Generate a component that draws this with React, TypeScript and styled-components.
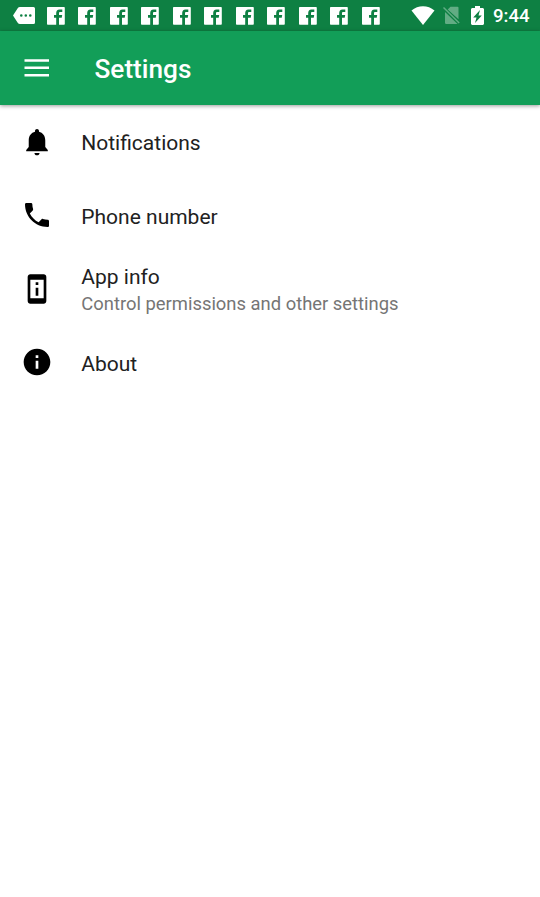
import React from "react";
import styled, { createGlobalStyle } from "styled-components";

const GlobalStyle = createGlobalStyle`
  * { box-sizing: border-box; }
  body { margin: 0; background: #fff; font-family: Roboto, sans-serif; }
`;

const Screen = styled.div`
  display: flex;
  flex-direction: column;
  height: 897px;
  overflow: hidden;
  background: #fff;
`;

const StatusBar = styled.div`
  display: flex;
  align-items: center;
  flex: none;
  height: 31px;
  padding: 0 11px 0 13px;
  background: #0e8043;
  color: #fff;
`;

const NoticeIcons = styled.div`
  display: flex;
  align-items: center;
  gap: 13.5px;
  flex: 1;
`;

const SystemIcons = styled.div`
  display: flex;
  align-items: center;
`;

const Glyph = styled.svg<{ $w: number; $h: number; $gap?: number }>`
  display: block;
  flex: none;
  width: ${(p) => p.$w}px;
  height: ${(p) => p.$h}px;
  margin-right: ${(p) => p.$gap ?? 0}px;
  fill: currentColor;
`;

const Clock = styled.span`
  width: 36px;
  padding-top: 2px;
  font-size: 18.6px;
  font-weight: 500;
  line-height: 31px;
  white-space: nowrap;
`;

const AppBar = styled.header`
  display: flex;
  align-items: center;
  flex: none;
  height: 74px;
  padding: 0 24px;
  gap: 44.5px;
  background: #129e58;
  color: #fff;
  box-shadow: 0 1px 4px rgba(0, 0, 0, 0.4);
`;

const Title = styled.h1`
  margin: 3px 0 0;
  font-size: 26.2px;
  font-weight: 500;
  line-height: 31px;
`;

const List = styled.main`
  display: flex;
  flex-direction: column;
`;

const Row = styled.div`
  display: flex;
  align-items: center;
  height: 73.5px;
  color: #000;
`;

const IconSlot = styled.div`
  width: 81.3px;
  padding-left: 20.8px;
`;

const RowText = styled.div`
  padding-top: 2.5px;
`;

const Label = styled.div`
  color: #212121;
  font-size: 21px;
  line-height: 26px;
`;

const Summary = styled.div`
  color: #757575;
  font-size: 18.4px;
  line-height: 27px;
`;

const rows = [
  { label: "Notifications", icon: "M12 22c1.1 0 1.900-.7 1.900-1.800h-3.800c0 1.100.8 1.800 1.900 1.800zm6.200-6.200v-5c0-3.400-1.900-5.700-4.700-6.400V3.700c0-.83-.67-1.500-1.500-1.500s-1.500.67-1.500 1.500v.7C7.700 5.100 5.800 7.400 5.800 10.800v5L3.900 18v1h16.200v-1z" },
  { label: "Phone number", icon: "M6.62 10.79c1.44 2.830 3.760 5.140 6.590 6.590l2.200-2.200c.27-.27.67-.36 1.020-.24 1.120.37 2.330.57 3.570.57.550 0 1 .45 1 1V20c0 .55-.45 1-1 1-9.390 0-17-7.610-17-17 0-.55.45-1 1-1h3.500c.55 0 1 .45 1 1 0 1.250.2 2.450.57 3.570.11.35.03.74-.25 1.020l-2.200 2.200z" },
  { label: "App info", summary: "Control permissions and other settings", icon: "M13 7h-2v2h2V7zm0 4h-2v6h2v-6zm4-9.990L7 1c-1.100 0-2 .9-2 2v18c0 1.100.9 2 2 2h10c1.100 0 2-.9 2-2V3c0-1.100-.9-1.990-2-1.990zM17 19H7V5h10v14z" },
  { label: "About", icon: "M12 2C6.480 2 2 6.480 2 12s4.480 10 10 10 10-4.480 10-10S17.520 2 12 2zm1 15h-2v-6h2v6zm0-8h-2V7h2v2z" },
];

export default function App() {
  return (
    <>
      <GlobalStyle />
      <Screen>
        <StatusBar>
          <NoticeIcons>
            <Glyph $w={22} $h={17} $gap={-2} viewBox="0 0 22 17">
              <path fillRule="evenodd" d="M7 0H20.500a1.500 1.500 0 0 1 1.500 1.500V15.500a1.500 1.500 0 0 1-1.500 1.500H7Q5.500 17 4.700 15.700L0 8.500 4.700 1.300Q5.500 0 7 0ZM7 8.500a1.300 1.300 0 1 0 2.600 0a1.300 1.300 0 1 0-2.600 0zM11.500 8.500a1.300 1.300 0 1 0 2.600 0a1.300 1.300 0 1 0-2.600 0zM16 8.500a1.300 1.300 0 1 0 2.600 0a1.300 1.300 0 1 0-2.600 0z" />
            </Glyph>
            {Array.from({ length: 11 }, (_, i) => (
              <Glyph key={i} $w={18} $h={18} viewBox="0 0 18 18">
                <path d="M.8 0H17a.8.8 0 0 1 .8.8V17a.8.8 0 0 1-.8.8H12V10.800H14.700l.5-2.700H12V6.300c0-.8.4-1.200 1.300-1.200h2V2.600h-2.800C10.200 2.600 9.200 4.100 9.200 6.200v1.900H7V10.800h2.200v7H.8a.8.8 0 0 1-.8-.8V.8A.8.8 0 0 1 .8 0z" />
              </Glyph>
            ))}
          </NoticeIcons>
          <SystemIcons>
            <Glyph $w={24} $h={19} $gap={8} viewBox="0 0 24 19">
              <path d="M.5 4.500C7-1.300 17-1.300 23.500 4.500L12 19z" />
            </Glyph>
            <Glyph $w={17} $h={19} $gap={10.5} viewBox="0 0 17 19">
              <path opacity=".35" d="M7.500 .8H14.500q1 0 1 1V13.300L4.700 3.600zM2 6L14.500 18H3.200q-1.200 0-1.200-1.200zM0 2l1-1L16.700 16.500l-1 1z" />
            </Glyph>
            <Glyph $w={13} $h={19} $gap={9.5} viewBox="0 0 13 19">
              <path fillRule="evenodd" d="M4 0h5v2h3l1 1v15l-1 1H1l-1-1V3l1-1h3zM9 4L2.200 11.500h3.300L4 17 10.800 9.500H7.500z" />
            </Glyph>
            <Clock>9:44</Clock>
          </SystemIcons>
        </StatusBar>
        <AppBar>
          <Glyph $w={26} $h={18} viewBox="0 0 26 18">
            <path d="M.5 0.300h24.500v2.500H.5zM.5 7.600h24.500v2.500H.5zM.5 14.900h24.500v2.500H.5z" />
          </Glyph>
          <Title>Settings</Title>
        </AppBar>
        <List>
          {rows.map((r) => (
            <Row key={r.label}>
              <IconSlot>
                <Glyph $w={32} $h={32} viewBox="0 0 24 24"><path d={r.icon} /></Glyph>
              </IconSlot>
              <RowText>
                <Label>{r.label}</Label>
                {r.summary && <Summary>{r.summary}</Summary>}
              </RowText>
            </Row>
          ))}
        </List>
      </Screen>
    </>
  );
}
